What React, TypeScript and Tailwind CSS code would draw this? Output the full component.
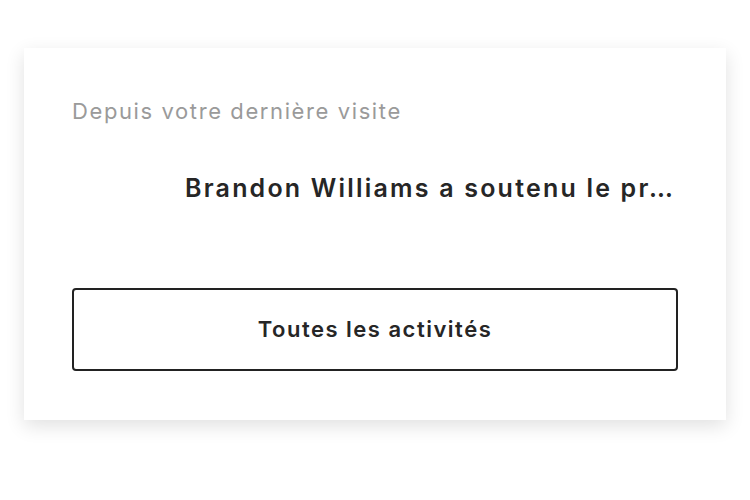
export default function App() {
  return (
    <div
      className="min-h-[500px] w-[750px] bg-white pt-[48px] pl-[24px]"
      style={{ fontFamily: "Inter, 'Noto Sans', sans-serif" }}
    >
      <div className="w-[702px] bg-white px-[48px] pt-[48px] pb-[49px] shadow-[0_6px_18px_rgba(0,0,0,0.12)]">
        <p className="text-[22px] leading-[30px] tracking-[1.6px] text-[#9a9a9a]">Depuis votre dernière visite</p>

        <div className="mt-[42px] flex items-center gap-[17px]">
          <div className="h-[40px] w-[96px] shrink-0" />
          <p className="whitespace-nowrap text-[25px] font-semibold leading-[32px] tracking-[2.2px] text-[#262626]">
            Brandon Williams a soutenu le pr…
          </p>
        </div>

        <button className="mt-[80px] flex h-[83px] w-full items-center justify-center rounded-[4px] border-2 border-[#222] text-[22px] font-semibold tracking-[1.5px] text-[#262626]">
          Toutes les activités
        </button>
      </div>
    </div>
  );
}
